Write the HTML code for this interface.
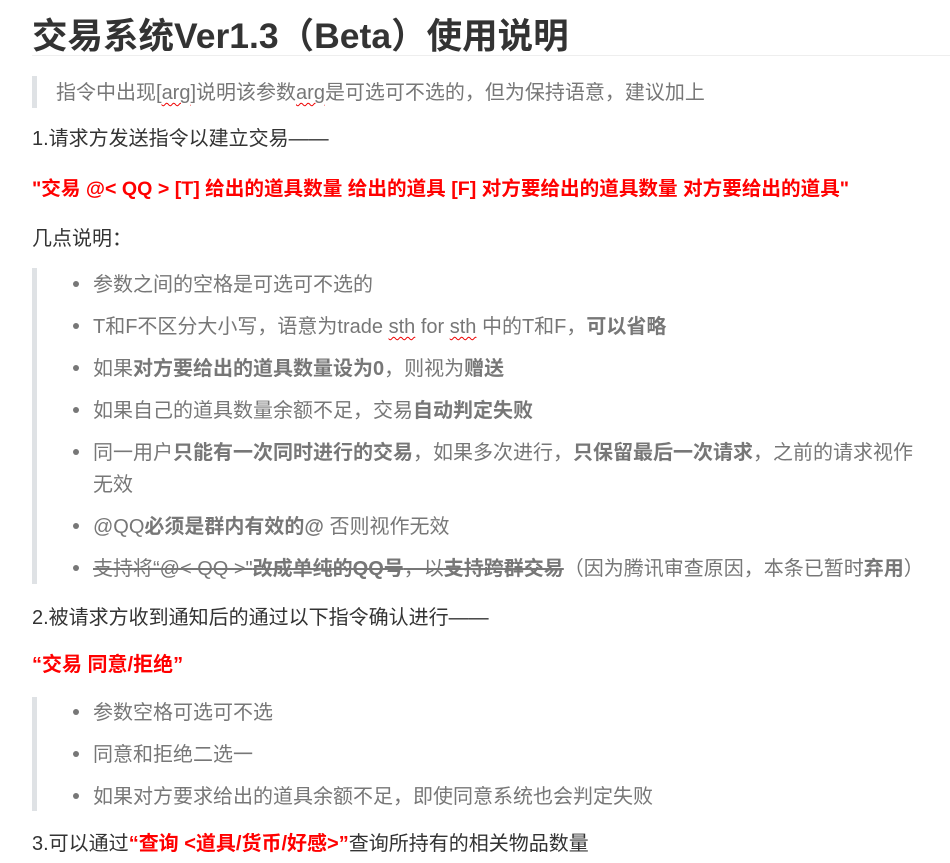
<!DOCTYPE html>
<html><head><meta charset="utf-8"><style>
body{margin:0;background:#fff;width:950px;height:863px;position:relative;overflow:hidden;font-family:"Liberation Sans","Noto Sans CJK SC",sans-serif;font-size:20px;color:#333}
.l{position:absolute;white-space:nowrap;line-height:32px;height:32px}
.q{color:#777}
.r{color:#f00;font-weight:bold}
.bar{position:absolute;left:32px;width:5px;background:#dfe2e5}
.dot{position:absolute;width:6px;height:6px;border-radius:50%;background:#777}
.sq{text-decoration:underline wavy #e00;text-decoration-thickness:1px;text-underline-offset:3px}
b{font-weight:bold}
s{text-decoration:line-through}
</style></head><body>
<div class="l" style="left:32px;top:14px;font-size:35.5px;font-weight:bold;line-height:44px;height:44px">交易系统Ver1.3（Beta）使用说明</div>
<div style="position:absolute;left:32px;top:55px;width:918px;height:1px;background:#eee"></div>
<div class="bar" style="top:76px;height:32px"></div>
<div class="l q" style="left:56px;top:77px">指令中出现[<span class="sq">arg</span>]说明该参数<span class="sq">arg</span>是可选可不选的，但为保持语意，建议加上</div>
<div class="l" style="left:32px;top:123px">1.请求方发送指令以建立交易——</div>
<div class="l r" style="left:32px;top:173px;font-size:19.6px">"交易 @&lt; QQ &gt; [T] 给出的道具数量 给出的道具 [F] 对方要给出的道具数量 对方要给出的道具"</div>
<div class="l" style="left:32px;top:223px">几点说明：</div>
<div class="bar" style="top:268px;height:316px"></div>
<div class="dot" style="left:73px;top:281px"></div><div class="l q" style="left:93px;top:269px">参数之间的空格是可选可不选的</div>
<div class="dot" style="left:73px;top:323px"></div><div class="l q" style="left:93px;top:311px">T和F不区分大小写，语意为trade <span class="sq">sth</span> for <span class="sq">sth</span> 中的T和F，<b>可以省略</b></div>
<div class="dot" style="left:73px;top:365px"></div><div class="l q" style="left:93px;top:353px">如果<b>对方要给出的道具数量设为0</b>，则视为<b>赠送</b></div>
<div class="dot" style="left:73px;top:407px"></div><div class="l q" style="left:93px;top:395px">如果自己的道具数量余额不足，交易<b>自动判定失败</b></div>
<div class="dot" style="left:73px;top:449px"></div><div class="l q" style="left:93px;top:437px">同一用户<b>只能有一次同时进行的交易</b>，如果多次进行，<b>只保留最后一次请求</b>，之前的请求视作</div>
<div class="l q" style="left:93px;top:469px">无效</div>
<div class="dot" style="left:73px;top:523px"></div><div class="l q" style="left:93px;top:511px">@QQ<b>必须是群内有效的@</b> 否则视作无效</div>
<div class="dot" style="left:73px;top:565px"></div><div class="l q" style="left:93px;top:553px"><s>支持将“@&lt; QQ &gt;"<b>改成单纯的QQ号</b>，以<b>支持跨群交易</b></s>（因为腾讯审查原因，本条已暂时<b>弃用</b>）</div>
<div class="l" style="left:32px;top:602px">2.被请求方收到通知后的通过以下指令确认进行——</div>
<div class="l r" style="left:32px;top:649px">“交易 同意/拒绝”</div>
<div class="bar" style="top:697px;height:114px"></div>
<div class="dot" style="left:73px;top:709px"></div><div class="l q" style="left:93px;top:697px">参数空格可选可不选</div>
<div class="dot" style="left:73px;top:751px"></div><div class="l q" style="left:93px;top:739px">同意和拒绝二选一</div>
<div class="dot" style="left:73px;top:793px"></div><div class="l q" style="left:93px;top:781px">如果对方要求给出的道具余额不足，即使同意系统也会判定失败</div>
<div class="l" style="left:32px;top:828px">3.可以通过<span class="r">“查询 &lt;道具/货币/好感&gt;”</span>查询所持有的相关物品数量</div>
</body></html>
